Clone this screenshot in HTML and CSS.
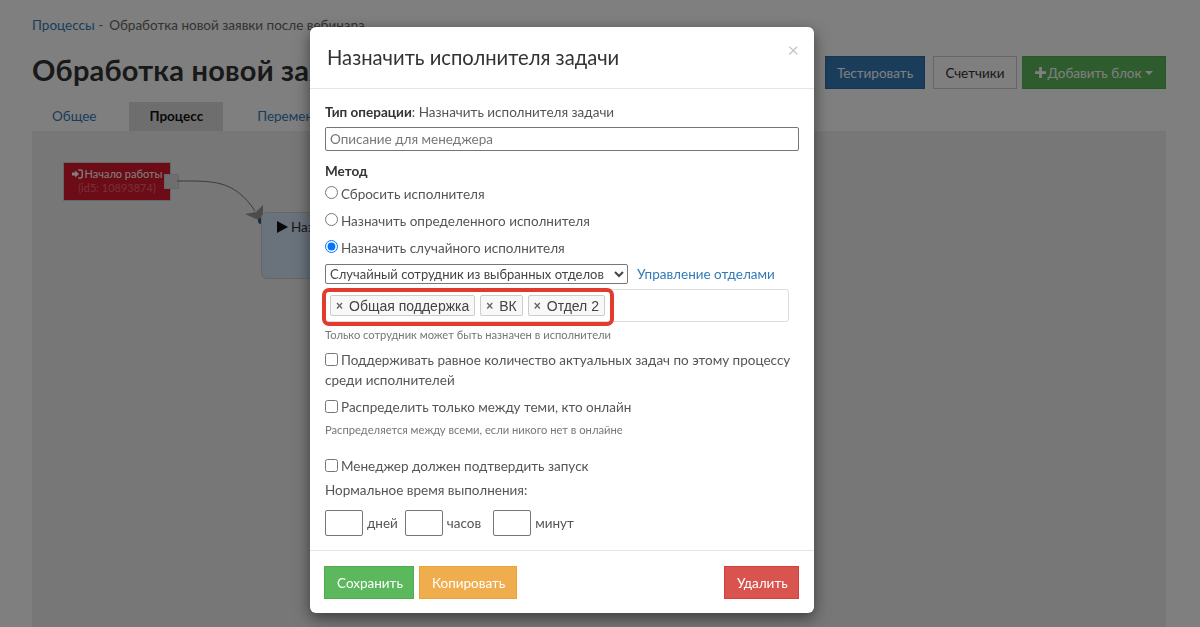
FILE: index.html
```html
<!DOCTYPE html>
<html lang="ru">
<head>
<meta charset="utf-8">
<title>Назначить исполнителя задачи</title>
<link rel="stylesheet" href="styles.css">
</head>
<body>
<div class="page">
  <div class="crumbs"><a class="crumb-link">Процессы -</a><span class="crumb-current">Обработка новой заявки после вебинара</span></div>
  <div class="head-row">
    <h1 class="page-title">Обработка новой заявки после вебинара</h1>
    <div class="actions">
      <button class="btn btn-blue">Тестировать</button>
      <button class="btn btn-plain">Счетчики</button>
      <button class="btn btn-green"><svg class="plus" viewBox="0 0 12 12"><path d="M4.500 0h3v4.500H12v3H7.500V12h-3V7.500H0v-3h4.500z"/></svg>Добавить блок<span class="caret"></span></button>
    </div>
  </div>
  <div class="tabs">
    <a class="tab">Общее</a>
    <a class="tab tab-active">Процесс</a>
    <a class="tab">Переменные</a>
  </div>
  <div class="canvas">
    <div class="node-start">
      <div class="node-start-title"><svg class="signin" viewBox="0 0 14 12"><path d="M0 4h4V1.500L9 6l-5 4.500V8H0z"/><path d="M8 0h3a3 3 0 0 1 3 3v6a3 3 0 0 1-3 3H8v-1.800h3A1.200 1.200 0 0 0 12.200 9V3A1.200 1.200 0 0 0 11 1.800H8z"/></svg>Начало работы</div>
      <div class="node-start-id">(id5: 10893874)</div>
    </div>
    <div class="node-port"></div>
    <svg class="wire" viewBox="0 0 120 70"><path class="wire-line" d="M5 6C40 6 62 4 83 36"/><path class="wire-arrow" d="M91 30L91 47L73 39L84 37z"/><circle class="wire-dot" cx="89" cy="46" r="3"/></svg>
    <div class="node-task"><svg class="play" viewBox="0 0 11 12"><path d="M0 0L11 6L0 12z"/></svg>Назначить</div>
  </div>
</div>
<div class="backdrop"></div>
<div class="modal">
  <div class="modal-head">
    <h4 class="modal-title">Назначить исполнителя задачи</h4>
    <span class="close">×</span>
  </div>
  <div class="modal-body">
    <div class="row-type"><b>Тип операции</b>: Назначить исполнителя задачи</div>
    <input class="text-input" type="text" placeholder="Описание для менеджера">
    <div class="row-method"><b>Метод</b></div>
    <label class="radio-row"><input class="choice" type="radio" name="m">Сбросить исполнителя</label>
    <label class="radio-row"><input class="choice" type="radio" name="m">Назначить определенного исполнителя</label>
    <label class="radio-row"><input class="choice" type="radio" name="m" checked>Назначить случайного исполнителя</label>
    <div class="select-row">
      <select class="select"><option>Случайный сотрудник из выбранных отделов</option></select>
      <a class="link">Управление отделами</a>
    </div>
    <div class="tags">
      <span class="tag"><span class="tag-x">×</span>Общая поддержка</span>
      <span class="tag"><span class="tag-x">×</span>ВК</span>
      <span class="tag"><span class="tag-x">×</span>Отдел 2</span>
      <div class="highlight"></div>
    </div>
    <div class="hint hint-first">Только сотрудник может быть назначен в исполнители</div>
    <label class="check-row check-first"><input class="choice" type="checkbox">Поддерживать равное количество актуальных задач по этому процессу среди исполнителей</label>
    <label class="check-row check-second"><input class="choice" type="checkbox">Распределить только между теми, кто онлайн</label>
    <div class="hint hint-second">Распределяется между всеми, если никого нет в онлайне</div>
    <label class="check-row check-third"><input class="choice" type="checkbox">Менеджер должен подтвердить запуск</label>
    <div class="row-normal">Нормальное время выполнения:</div>
    <div class="time-row">
      <input class="time-input" type="text"><span class="time-unit unit-days">дней</span>
      <input class="time-input" type="text"><span class="time-unit unit-hours">часов</span>
      <input class="time-input" type="text"><span class="time-unit">минут</span>
    </div>
  </div>
  <div class="modal-foot">
    <button class="mbtn mbtn-save">Сохранить</button>
    <button class="mbtn mbtn-copy">Копировать</button>
    <button class="mbtn mbtn-del">Удалить</button>
  </div>
</div>
</body>
</html>
```
FILE: styles.css
```css
* { box-sizing: border-box; }
html, body { margin: 0; height: 100%; overflow: hidden; }
body { background: #fff; color: #333; font-family: "Lato", "Open Sans", sans-serif; font-size: 13.500px; }
.page { height: 627px; padding: 15px 34px 0 32px; overflow: hidden; }
.crumbs { display: flex; gap: 6px; line-height: 20px; color: #666; white-space: nowrap; }
.crumb-link { color: #337ab7; }
.head-row { display: flex; justify-content: space-between; align-items: flex-start; margin-top: 21px; height: 34px; }
.page-title { margin: 0; font-size: 29px; font-weight: 700; color: #333; white-space: nowrap; line-height: 28px; letter-spacing: .2px; }
.actions { display: flex; gap: 5px; align-items: stretch; height: 33px; }
.btn { border: 1px solid; font: inherit; padding: 0; height: 33px; display: flex; align-items: center; justify-content: center; }
.btn-blue { width: 100px; background: #337ab7; border-color: #2e6da4; color: #fff; margin-right: 3px; }
.btn-plain { width: 84px; background: #fff; border-color: #ccc; color: #333; }
.btn-green { width: 144px; background: #5cb85c; border-color: #4cae4c; color: #fff; }
.plus { width: 11px; height: 11px; margin-right: 2px; fill: #fff; }
.caret { width: 0; height: 0; border: 4px solid transparent; border-top-color: #fff; border-bottom: 0; margin-left: 4px; }
.tabs { display: flex; margin-top: 12px; height: 29px; }
.tab { display: block; padding: 0 20px; line-height: 29px; color: #337ab7; }
.tab-active { background: #ddd; color: #111; font-weight: 700; margin-right: 14px; margin-left: 13px; }
.canvas { position: relative; height: 500px; background: #eee; }
.node-start { position: absolute; left: 31px; top: 31px; width: 108px; height: 39px; background: #d9182d; border: 1px solid #ccc; color: #fff; text-align: center; font-size: 11px; line-height: 14px; padding-top: 4px; }
.node-start-title { display: flex; justify-content: center; align-items: center; }
.node-start-id { color: #f06078; }
.signin { width: 11px; height: 10px; margin-right: 2px; fill: #fff; }
.node-port { position: absolute; left: 132px; top: 43px; width: 15px; height: 15px; background: #ddd; border: 1px solid #ccd; }
.wire { position: absolute; left: 140px; top: 44px; width: 120px; height: 70px; }
.wire-line { fill: none; stroke: #777; stroke-width: 1; }
.wire-arrow { fill: #999; }
.wire-dot { fill: #2c5a85; }
.node-task { position: absolute; left: 229px; top: 81px; width: 200px; height: 67px; background: #d4e4f7; border: 1px solid #ccc; border-radius: 6px; padding: 4px 15px; display: flex; align-items: flex-start; line-height: 20px; gap: 3px; }
.play { width: 11px; height: 12px; margin-top: 4px; fill: #111; }
.backdrop { position: fixed; inset: 0; background: rgba(0, 0, 0, .5); }
.modal { position: absolute; left: 310px; top: 27px; width: 504px; height: 586px; background: #fff; border-radius: 6px; box-shadow: 0 5px 15px rgba(0, 0, 0, .5); display: flex; flex-direction: column; }
.modal-head { height: 62px; border-bottom: 1px solid #e5e5e5; padding: 15px 17px; position: relative; }
.modal-title { margin: 0; font-size: 20.200px; font-weight: 400; line-height: 30px; color: #333; }
.close { position: absolute; right: 15px; top: 12px; font-size: 20px; line-height: 20px; color: #c9c9c9; }
.modal-body { flex: 1; padding: 13px 15px 0; color: #555; line-height: 20px; }
.modal-body b { color: #333; }
.text-input { display: block; width: 474px; height: 24px; margin-top: 5px; border: 1px solid #767676; border-radius: 2px; padding: 1px 4px; font: inherit; color: #555; }
.text-input::placeholder { color: #777; }
.row-method { margin-top: 10px; }
.radio-row { display: flex; align-items: center; height: 27px; white-space: nowrap; }
.radio-row:first-of-type { margin-top: -1px; }
.choice { width: 13px; height: 13px; margin: 0 3px 2px 0; flex: none; }
.select-row { display: flex; align-items: center; gap: 9px; height: 21px; margin-top: 2px; }
.select { width: 303px; height: 20px; font: inherit; font-size: 13px; color: #444; background: #fff; border: 1px solid #767676; border-radius: 2px; padding: 0; }
.link { color: #337ab7; white-space: nowrap; }
.tags { position: relative; display: flex; gap: 5px; align-items: center; width: 464px; height: 33px; margin-top: 5px; padding-left: 4px; border: 1px solid #ddd; border-radius: 3px; }
.tag { display: flex; align-items: center; height: 21px; padding: 0 5px; border: 1px solid #ccc; border-radius: 2px; background: #f8f8f8; font-family: "Liberation Sans", sans-serif; font-size: 14px; color: #444; white-space: nowrap; }
.tag-x { color: #666; font-weight: 700; font-size: 12px; margin-right: 6px; }
.highlight { position: absolute; left: -4px; top: -2px; width: 292px; height: 38px; border: 4px solid #e23b2e; border-radius: 7px; }
.hint { font-size: 11.200px; color: #777; line-height: 14px; }
.hint-first { margin-top: 6px; }
.check-row { display: block; line-height: 20px; }
.check-first { margin-top: 8px; }
.check-second { margin-top: 7px; }
.check-third { margin-top: 19px; }
.check-row .choice { vertical-align: -1px; margin-bottom: 0; }
.hint-second { margin-top: 6px; }
.row-normal { margin-top: 4px; }
.time-row { display: flex; align-items: center; margin-top: 10px; height: 26px; }
.time-input { width: 38px; height: 26px; border: 1px solid #767676; border-radius: 2px; padding: 0; }
.time-unit { margin-left: 4px; }
.unit-days { margin-right: 7px; }
.unit-hours { margin-right: 12px; }
.modal-foot { height: 63px; border-top: 1px solid #e5e5e5; padding: 15px 15px 0 14px; display: flex; gap: 5px; }
.mbtn { height: 33px; border: 1px solid; color: #fff; font: inherit; padding: 0 12px; }
.mbtn-save { width: 90px; background: #5cb85c; border-color: #4cae4c; }
.mbtn-copy { width: 98px; background: #f0ad4e; border-color: #eea236; }
.mbtn-del { width: 75px; margin-left: auto; background: #d9534f; border-color: #d43f3a; }
```
